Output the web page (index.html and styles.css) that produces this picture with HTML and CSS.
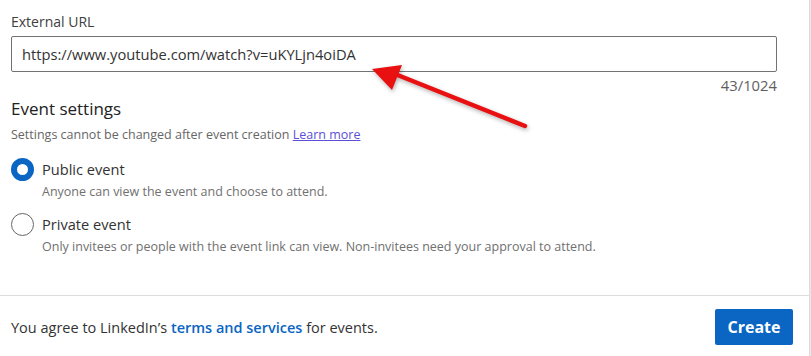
FILE: index.html
```html
<!DOCTYPE html>
<html lang="en">
<head>
    <meta charset="UTF-8">
    <title>Create event</title>
    <link rel="stylesheet" href="styles.css">
</head>
<body>
    <div class="modal">
        <div class="modal-body">
            <label class="field-label" for="ext_url">External URL</label>
            <input class="text-input" type="text" id="ext_url" value="https://www.youtube.com/watch?v=uKYLjn4oiDA">
            <div class="counter">43/1024</div>

            <h2 class="section-title">Event settings</h2>
            <p class="section-note">Settings cannot be changed after event creation <a href="#" class="learn-link">Learn more</a></p>

            <div class="radio-row">
                <span class="radio checked"></span>
                <div>
                    <div class="radio-label">Public event</div>
                    <div class="radio-hint">Anyone can view the event and choose to attend.</div>
                </div>
            </div>
            <div class="radio-row">
                <span class="radio"></span>
                <div>
                    <div class="radio-label">Private event</div>
                    <div class="radio-hint">Only invitees or people with the event link can view. Non-invitees need your approval to attend.</div>
                </div>
            </div>
        </div>
        <div class="modal-footer">
            <p class="terms">You agree to LinkedIn’s <a href="#" class="terms-link">terms and services</a> for events.</p>
            <button class="create-button">Create</button>
        </div>

        <!-- annotation arrow drawn over the screenshot -->
        <svg class="arrow" width="200" height="80" viewBox="0 0 200 80">
            <line x1="155" y1="60" x2="25" y2="8" stroke="#e81010" stroke-width="4.5" stroke-linecap="round"/>
            <polygon points="2,3 32,-1 22,24" fill="#e81010"/>
        </svg>
    </div>
</body>
</html>
```

FILE: styles.css
```css
body {
    margin: 0;
    background-color: #e9e9e9;
    font-family: "Open Sans", "Noto Sans", sans-serif;
    color: rgba(0, 0, 0, 0.9);
}
.modal {
    position: relative;
    width: 809px;
    height: 356px;
    background-color: #ffffff;
    border-right: 1px solid #dcdcdc;
}
.modal-body {
    padding: 12px 35px 0 11px;
    height: 283px;
}
.field-label {
    display: block;
    font-size: 14px;
    line-height: 20px;
    color: #404040;
    margin-bottom: 4px;
}
.text-input {
    box-sizing: border-box;
    width: 766px;
    height: 36px;
    padding: 0 10px;
    border: 1px solid #737373;
    border-radius: 2px;
    font-family: inherit;
    font-size: 14.7px;
    color: #333;
}
.counter {
    width: 766px;
    margin-top: 3px;
    text-align: right;
    font-size: 14.8px;
    line-height: 20px;
    color: #5e5e5e;
}
.section-title {
    margin: 2px 0 0;
    font-size: 17px;
    font-weight: normal;
    line-height: 24px;
    color: #222;
}
.section-note {
    margin: 5px 0 14px;
    font-size: 12.5px;
    line-height: 18px;
    color: #666;
}
.learn-link {
    color: #5a4fd6;
}
.radio-row {
    display: flex;
    gap: 8px;
    margin-bottom: 12px;
}
.radio {
    box-sizing: border-box;
    flex: none;
    width: 23px;
    height: 23px;
    border: 1px solid #666;
    border-radius: 50%;
}
.radio.checked {
    border: 6px solid #0a66c2;
}
.radio-label {
    font-size: 14.6px;
    line-height: 22px;
    color: #333;
}
.radio-hint {
    margin-top: 3px;
    font-size: 12.5px;
    line-height: 18px;
    color: #707070;
}
.modal-footer {
    border-top: 1px solid #dddddd;
    display: flex;
    justify-content: space-between;
    align-items: center;
    padding: 13px 16px 0 11px;
}
.terms {
    margin: 0;
    font-size: 14.5px;
    color: #333;
}
.terms-link {
    color: #0a66c2;
    text-decoration: none;
    font-weight: 600;
}
.create-button {
    width: 78px;
    height: 36px;
    border: none;
    border-radius: 2px;
    background-color: #0a66c2;
    color: white;
    font-family: inherit;
    font-size: 16px;
    font-weight: 700;
    cursor: pointer;
}
.arrow {
    position: absolute;
    left: 370px;
    top: 66px;
    overflow: visible;
    filter: drop-shadow(1px 2px 2px rgba(0, 0, 0, 0.3));
}
```
